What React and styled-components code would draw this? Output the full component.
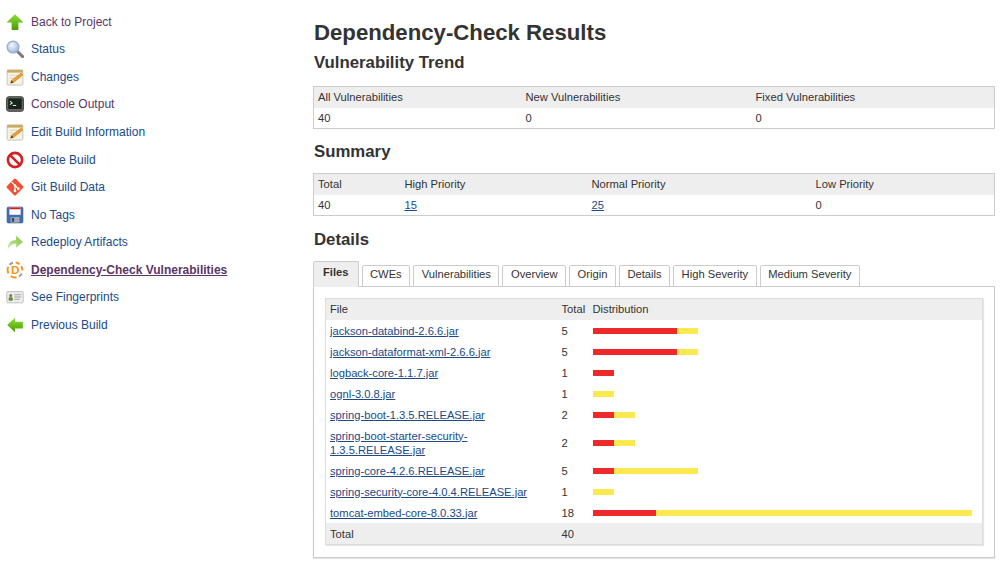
import React from "react";
import styled, { createGlobalStyle } from "styled-components";

const Global = createGlobalStyle`
  html, body { margin: 0; padding: 0; background: #fff; }
  body {
    font-family: "Liberation Sans", Arial, sans-serif;
    font-size: 12px;
    color: #333;
  }
`;

const Page = styled.div`
  display: flex;
  width: 1000px;
  min-height: 567px;
`;

const Sidebar = styled.nav`
  width: 307px;
  flex: none;
  padding: 8px 0 0 6px;
  display: flex;
  flex-direction: column;
`;

const NavItem = styled.a`
  display: flex;
  align-items: center;
  gap: 7px;
  height: 27.55px;
  text-decoration: ${(p) => (p.$current ? "underline" : "none")};
  font-weight: ${(p) => (p.$current ? "bold" : "normal")};
  color: ${(p) => (p.$visited ? "#5c3566" : "#204a87")};
  cursor: pointer;
  font-size: 12px;
`;

const IconBox = styled.span`
  width: 18px;
  height: 18px;
  flex: none;
  display: inline-flex;
  svg { width: 18px; height: 18px; display: block; }
`;

const Main = styled.main`
  flex: 1;
  padding: 19px 5px 0 0;
  display: flex;
  flex-direction: column;
  font-size: 11.2px;
`;

const Title = styled.h1`
  margin: 0 0 0 1px;
  font-size: 22.2px;
  line-height: 28px;
  font-weight: bold;
  color: #333;
`;

const Heading = styled.h2`
  margin: ${(p) => p.$mt}px 0 0 1px;
  font-size: 16.8px;
  line-height: 22px;
  font-weight: bold;
  color: #333;
`;

const DataTable = styled.table`
  margin-top: ${(p) => p.$mt}px;
  width: 100%;
  border-collapse: collapse;
  table-layout: fixed;
  border: 1px solid #ccc;
  font-size: 11.2px;
  color: #333;
`;

const HeadCell = styled.th`
  background: #eee;
  text-align: left;
  font-weight: normal;
  padding: 0 4px;
  height: 21px;
  line-height: 21px;
`;

const Cell = styled.td`
  padding: 0 4px;
  height: 20px;
  line-height: 20px;
`;

const NumLink = styled.a`
  color: #204a87;
  text-decoration: underline;
  cursor: pointer;
`;

const TabBar = styled.div`
  margin-top: 10px;
  display: flex;
  align-items: flex-end;
  gap: 3px;
  position: relative;
  z-index: 1;
  margin-bottom: -1px;
`;

const Tab = styled.div`
  box-sizing: border-box;
  height: ${(p) => (p.$active ? 26 : 22)}px;
  line-height: ${(p) => (p.$active ? 20 : 17)}px;
  padding: 0 ${(p) => (p.$active ? 9 : 7.5)}px;
  border: 1px solid #ccc;
  border-bottom: ${(p) => (p.$active ? "1px solid #eee" : "1px solid #ccc")};
  border-radius: 2px 2px 0 0;
  background: ${(p) => (p.$active ? "#eee" : "#fff")};
  font-weight: ${(p) => (p.$active ? "bold" : "normal")};
  font-size: 11.2px;
  color: #333;
  cursor: pointer;
`;

const Panel = styled.div`
  border: 1px solid #ccc;
  padding: 11px 11px 12px 11px;
  box-shadow: 0 1px 1px #e4e4e4;
`;

const FilesTable = styled.table`
  width: 100%;
  border-collapse: collapse;
  table-layout: fixed;
  border: 1px solid #ddd;
  box-shadow: 1px 1px 1px #e6e6e6;
  font-size: 11.2px;
  color: #333;
`;

const FHead = styled.th`
  background: #eee;
  text-align: left;
  font-weight: normal;
  padding: 0 4px;
  height: 21px;
  line-height: 21px;
`;

const FCell = styled.td`
  padding: 3.5px 4px;
  line-height: 14px;
  vertical-align: middle;
  background: ${(p) => (p.$foot ? "#eee" : "#fff")};
  height: 14px;
`;

const FileLink = styled.a`
  color: #204a87;
  text-decoration: underline;
  cursor: pointer;
`;

const Distribution = styled.div`
  display: flex;
  height: 6px;
`;

const Bar = styled.div`
  height: 6px;
  background: ${(p) => (p.$kind === "high" ? "#ef2929" : "#fce94f")};
`;

/* ---------- icons ---------- */

const UpArrow = () => (
  <svg viewBox="0 0 16 16">
    <defs>
      <linearGradient id="gup" x1="0" y1="0" x2="0" y2="1">
        <stop offset="0" stopColor="#8ae234" />
        <stop offset="1" stopColor="#4e9a06" />
      </linearGradient>
    </defs>
    <polygon points="8,1 15.5,8.5 11,8.5 11,15 5,15 5,8.5 0.5,8.5" fill="url(#gup)" />
  </svg>
);

const LeftArrow = () => (
  <svg viewBox="0 0 16 16">
    <defs>
      <linearGradient id="gleft" x1="0" y1="0" x2="0" y2="1">
        <stop offset="0" stopColor="#8ae234" />
        <stop offset="1" stopColor="#4e9a06" />
      </linearGradient>
    </defs>
    <polygon points="1,8 8,1.5 8,5 15,5 15,11 8,11 8,14.5" fill="url(#gleft)" />
  </svg>
);

const Magnifier = () => (
  <svg viewBox="0 0 16 16">
    <defs>
      <radialGradient id="glens" cx="0.4" cy="0.35" r="0.7">
        <stop offset="0" stopColor="#f4f8fd" />
        <stop offset="1" stopColor="#8fb3de" />
      </radialGradient>
    </defs>
    <line x1="10" y1="10" x2="14.8" y2="14.8" stroke="#7a7a7a" strokeWidth="2.6" strokeLinecap="round" />
    <circle cx="6.3" cy="6.3" r="5.3" fill="url(#glens)" stroke="#9aa9b8" strokeWidth="1" />
  </svg>
);

const Notepad = () => (
  <svg viewBox="0 0 16 16">
    <rect x="1" y="2" width="14" height="13.2" rx="1" fill="#f7f3e3" stroke="#bdb7a3" strokeWidth="0.7" />
    <rect x="1" y="1.5" width="14" height="2.6" fill="#c9aa6b" />
    <line x1="3" y1="6.5" x2="13" y2="6.5" stroke="#d9d2bb" strokeWidth="0.7" />
    <line x1="3" y1="9" x2="13" y2="9" stroke="#d9d2bb" strokeWidth="0.7" />
    <line x1="3" y1="11.5" x2="9" y2="11.5" stroke="#d9d2bb" strokeWidth="0.7" />
    <polygon points="4,13.5 5,11 13.5,4.5 15,6.3 6.6,12.8" fill="#f0a030" stroke="#a06a10" strokeWidth="0.4" />
    <polygon points="4,13.5 5,11 6.6,12.8" fill="#3a3a3a" />
  </svg>
);

const Console = () => (
  <svg viewBox="0 0 16 16">
    <rect x="0.5" y="1.5" width="15" height="13" rx="2" fill="#6b6b6b" stroke="#333" strokeWidth="0.8" />
    <rect x="2" y="3" width="12" height="9.5" fill="#17251a" />
    <polyline points="3.5,5.5 5.5,7 3.5,8.5" fill="none" stroke="#e8f5e8" strokeWidth="0.9" />
    <line x1="6" y1="9.3" x2="9" y2="9.3" stroke="#e8f5e8" strokeWidth="0.9" />
  </svg>
);

const NoEntry = () => (
  <svg viewBox="0 0 16 16">
    <circle cx="8" cy="8" r="6.3" fill="#fff" stroke="#d42020" strokeWidth="2.3" />
    <line x1="3.6" y1="3.6" x2="12.4" y2="12.4" stroke="#d42020" strokeWidth="2.3" />
  </svg>
);

const GitLogo = () => (
  <svg viewBox="0 0 16 16">
    <path d="M7.1 0.9 Q8 0 8.9 0.9 L15.1 7.1 Q16 8 15.1 8.9 L8.9 15.1 Q8 16 7.1 15.1 L0.9 8.9 Q0 8 0.9 7.1 Z" fill="#f05033" />
    <path d="M5 3.6 L8 6.6 L8 11.2 M8 6.6 L10.8 9.4" fill="none" stroke="#fff" strokeWidth="1.1" />
    <circle cx="8" cy="6.6" r="1.1" fill="#fff" />
    <circle cx="8" cy="11.4" r="1.2" fill="#fff" />
    <circle cx="10.9" cy="9.5" r="1.2" fill="#fff" />
  </svg>
);

const Floppy = () => (
  <svg viewBox="0 0 16 16">
    <rect x="1" y="1" width="14" height="14" rx="1" fill="#3f6fb0" stroke="#284a7a" strokeWidth="0.6" />
    <rect x="3" y="1.3" width="10" height="6.5" fill="#fff" />
    <rect x="3" y="1.3" width="10" height="1.6" fill="#cc2222" />
    <rect x="4" y="9.8" width="8" height="5" fill="#a0a8b4" />
    <rect x="5.2" y="10.6" width="2" height="3.4" fill="#3f4a58" />
  </svg>
);

const Redeploy = () => (
  <svg viewBox="0 0 16 16">
    <defs>
      <linearGradient id="gredeploy" x1="0" y1="1" x2="1" y2="0">
        <stop offset="0" stopColor="#d5ecb0" />
        <stop offset="1" stopColor="#7cc23a" />
      </linearGradient>
    </defs>
    <path d="M1.5 15 C1.5 9 4.5 6.3 9 6.3 L9 2.5 L15 8 L9 13 L9 9.6 C5.8 9.6 3.6 11 1.5 15 Z" fill="url(#gredeploy)" />
  </svg>
);

const DepCheck = () => (
  <svg viewBox="0 0 16 16">
    <path d="M2.2 11 A6.6 6.6 0 0 1 2 5.2" fill="none" stroke="#f7941d" strokeWidth="1.7" />
    <path d="M3.2 3.3 A6.6 6.6 0 0 1 6.2 1.6" fill="none" stroke="#9a9a9a" strokeWidth="1.7" />
    <path d="M8.6 1.4 A6.6 6.6 0 0 1 12 2.8" fill="none" stroke="#f7941d" strokeWidth="1.7" />
    <path d="M13.6 4.6 A6.6 6.6 0 0 1 14.5 8.6" fill="none" stroke="#f7941d" strokeWidth="1.7" />
    <path d="M14 11.2 A6.6 6.6 0 0 1 11.4 13.8" fill="none" stroke="#9a9a9a" strokeWidth="1.7" />
    <path d="M9.4 14.5 A6.6 6.6 0 0 1 4.2 13.4" fill="none" stroke="#f7941d" strokeWidth="1.7" />
    <text x="8.2" y="11.8" textAnchor="middle" fontFamily="Liberation Sans, Arial, sans-serif" fontWeight="bold" fontSize="10.5" fill="#f7941d">D</text>
  </svg>
);

const Fingerprint = () => (
  <svg viewBox="0 0 16 16">
    <rect x="0.7" y="3.2" width="14.6" height="10" rx="1" fill="#ececec" stroke="#a8a8a8" strokeWidth="0.6" />
    <circle cx="4.2" cy="6.8" r="1.3" fill="#8a6a3a" />
    <rect x="2.4" y="8.3" width="3.6" height="3" rx="0.6" fill="#5f8f3a" />
    <line x1="7.5" y1="6" x2="13.5" y2="6" stroke="#9a9a9a" strokeWidth="0.8" />
    <line x1="7.5" y1="8" x2="13.5" y2="8" stroke="#9a9a9a" strokeWidth="0.8" />
    <line x1="7.5" y1="10" x2="12" y2="10" stroke="#9a9a9a" strokeWidth="0.8" />
  </svg>
);

const navItems = [
  { label: "Back to Project", icon: UpArrow, visited: true },
  { label: "Status", icon: Magnifier },
  { label: "Changes", icon: Notepad },
  { label: "Console Output", icon: Console, visited: true },
  { label: "Edit Build Information", icon: Notepad },
  { label: "Delete Build", icon: NoEntry },
  { label: "Git Build Data", icon: GitLogo },
  { label: "No Tags", icon: Floppy },
  { label: "Redeploy Artifacts", icon: Redeploy },
  { label: "Dependency-Check Vulnerabilities", icon: DepCheck, visited: true, current: true },
  { label: "See Fingerprints", icon: Fingerprint },
  { label: "Previous Build", icon: LeftArrow },
];

const tabs = [
  "Files",
  "CWEs",
  "Vulnerabilities",
  "Overview",
  "Origin",
  "Details",
  "High Severity",
  "Medium Severity",
];

const files = [
  { name: "jackson-databind-2.6.6.jar", total: 5, high: 4, normal: 1 },
  { name: "jackson-dataformat-xml-2.6.6.jar", total: 5, high: 4, normal: 1 },
  { name: "logback-core-1.1.7.jar", total: 1, high: 1, normal: 0 },
  { name: "ognl-3.0.8.jar", total: 1, high: 0, normal: 1 },
  { name: "spring-boot-1.3.5.RELEASE.jar", total: 2, high: 1, normal: 1 },
  { name: "spring-boot-starter-security-", rest: "1.3.5.RELEASE.jar", total: 2, high: 1, normal: 1 },
  { name: "spring-core-4.2.6.RELEASE.jar", total: 5, high: 1, normal: 4 },
  { name: "spring-security-core-4.0.4.RELEASE.jar", total: 1, high: 0, normal: 1 },
  { name: "tomcat-embed-core-8.0.33.jar", total: 18, high: 3, normal: 15 },
];

const UNIT = 21.07;

export default function App() {
  return (
    <>
      <Global />
      <Page>
        <Sidebar>
          {navItems.map(({ label, icon: Icon, visited, current }) => (
            <NavItem key={label} $visited={visited} $current={current}>
              <IconBox>
                <Icon />
              </IconBox>
              {label}
            </NavItem>
          ))}
        </Sidebar>

        <Main>
          <Title>Dependency-Check Results</Title>
          <Heading $mt={5}>Vulnerability Trend</Heading>
          <DataTable $mt={12}>
            <colgroup>
              <col style={{ width: 208 }} />
              <col style={{ width: 230 }} />
              <col />
            </colgroup>
            <thead>
              <tr>
                <HeadCell>All Vulnerabilities</HeadCell>
                <HeadCell>New Vulnerabilities</HeadCell>
                <HeadCell>Fixed Vulnerabilities</HeadCell>
              </tr>
            </thead>
            <tbody>
              <tr>
                <Cell>40</Cell>
                <Cell>0</Cell>
                <Cell>0</Cell>
              </tr>
            </tbody>
          </DataTable>

          <Heading $mt={12}>Summary</Heading>
          <DataTable $mt={10}>
            <colgroup>
              <col style={{ width: 87 }} />
              <col style={{ width: 187 }} />
              <col style={{ width: 224 }} />
              <col />
            </colgroup>
            <thead>
              <tr>
                <HeadCell>Total</HeadCell>
                <HeadCell>High Priority</HeadCell>
                <HeadCell>Normal Priority</HeadCell>
                <HeadCell>Low Priority</HeadCell>
              </tr>
            </thead>
            <tbody>
              <tr>
                <Cell>40</Cell>
                <Cell>
                  <NumLink>15</NumLink>
                </Cell>
                <Cell>
                  <NumLink>25</NumLink>
                </Cell>
                <Cell>0</Cell>
              </tr>
            </tbody>
          </DataTable>

          <Heading $mt={13}>Details</Heading>
          <TabBar>
            {tabs.map((t, i) => (
              <Tab key={t} $active={i === 0}>
                {t}
              </Tab>
            ))}
          </TabBar>
          <Panel>
            <FilesTable>
              <colgroup>
                <col style={{ width: 232 }} />
                <col style={{ width: 31 }} />
                <col />
              </colgroup>
              <thead>
                <tr>
                  <FHead>File</FHead>
                  <FHead>Total</FHead>
                  <FHead>Distribution</FHead>
                </tr>
              </thead>
              <tbody>
                {files.map((f) => (
                  <tr key={f.name + (f.rest || "")}>
                    <FCell>
                      <FileLink>
                        {f.name}
                        {f.rest && <wbr />}
                        {f.rest}
                      </FileLink>
                    </FCell>
                    <FCell>{f.total}</FCell>
                    <FCell>
                      <Distribution>
                        {f.high > 0 && <Bar $kind="high" style={{ width: f.high * UNIT }} />}
                        {f.normal > 0 && <Bar $kind="normal" style={{ width: f.normal * UNIT }} />}
                      </Distribution>
                    </FCell>
                  </tr>
                ))}
                <tr>
                  <FCell $foot>Total</FCell>
                  <FCell $foot>40</FCell>
                  <FCell $foot />
                </tr>
              </tbody>
            </FilesTable>
          </Panel>
        </Main>
      </Page>
    </>
  );
}
